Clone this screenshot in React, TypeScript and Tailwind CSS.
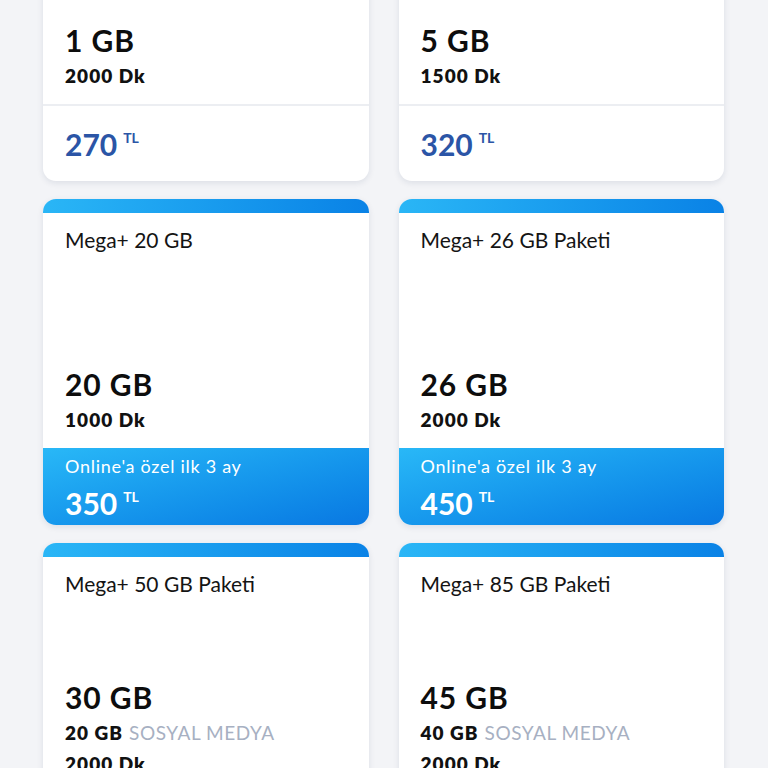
import React from "react";

type Plan = {
  title: string;
  data: string;
  lines: { main: string; extra?: string }[];
  price: string;
  promo?: string;
  highlight: boolean;
};

const plans: Plan[] = [
  { title: "Mega 1 GB", data: "1 GB", lines: [{ main: "2000 Dk" }], price: "270", highlight: false },
  { title: "Mega 5 GB", data: "5 GB", lines: [{ main: "1500 Dk" }], price: "320", highlight: false },
  { title: "Mega+ 20 GB", data: "20 GB", lines: [{ main: "1000 Dk" }], price: "350", promo: "Online'a özel ilk 3 ay", highlight: true },
  { title: "Mega+ 26 GB Paketi", data: "26 GB", lines: [{ main: "2000 Dk" }], price: "450", promo: "Online'a özel ilk 3 ay", highlight: true },
  { title: "Mega+ 50 GB Paketi", data: "30 GB", lines: [{ main: "20 GB", extra: "SOSYAL MEDYA" }, { main: "2000 Dk" }], price: "499", promo: "Online'a özel ilk 3 ay", highlight: true },
  { title: "Mega+ 85 GB Paketi", data: "45 GB", lines: [{ main: "40 GB", extra: "SOSYAL MEDYA" }, { main: "2000 Dk" }], price: "599", promo: "Online'a özel ilk 3 ay", highlight: true },
];

function Card({ p }: { p: Plan }) {
  return (
    <div className="flex flex-col overflow-hidden rounded-[13px] bg-white shadow-[0_2px_6px_rgba(20,40,80,0.10)]">
      <div className={p.highlight ? "h-[14px] bg-gradient-to-r from-[#2ab6f6] to-[#0a82e6]" : "h-[14px] bg-white"} />
      <div className="flex h-[235px] flex-col justify-between px-[22px] pt-[13px] pb-[16px]">
        <div className="text-[21px] leading-[28px] text-[#141414]">{p.title}</div>
        <div>
          <div className="text-[30px] font-bold leading-[34px] tracking-[0.03em] text-[#0d0d0d]">{p.data}</div>
          <div className="mt-[7px] flex flex-col gap-[7px]">
            {p.lines.map((l, i) => (
              <div key={i} className="text-[19px] font-extrabold leading-[24px] tracking-[0.055em] text-[#111]">
                {l.main}
                {l.extra && (
                  <span className="ml-[6px] font-normal tracking-[0.03em] text-[#a7b0c2]">{l.extra}</span>
                )}
              </div>
            ))}
          </div>
        </div>
      </div>
      {p.highlight ? (
        <div className="h-[77px] bg-gradient-to-br from-[#29b8f7] to-[#0a78e2] px-[22px] pt-[6px] text-white">
          <div className="text-[18px] leading-[24px] tracking-[0.04em]">{p.promo}</div>
          <div className="mt-[8px] flex items-start leading-[34px]">
            <span className="text-[30px] font-bold">{p.price}</span>
            <span className="ml-[6px] mt-[1px] text-[14px] font-bold leading-[20px]">TL</span>
          </div>
        </div>
      ) : (
        <div className="flex h-[77px] items-center border-t-2 border-[#eceef2] px-[22px]">
          <div className="flex items-start text-[#2b55a6]">
            <span className="text-[30px] font-bold leading-[34px]">{p.price}</span>
            <span className="ml-[6px] mt-[1px] text-[14px] font-bold leading-[20px]">TL</span>
          </div>
        </div>
      )}
    </div>
  );
}

export default function App() {
  return (
    <div className="h-[768px] overflow-hidden bg-[#f3f4f7]" style={{ fontFamily: "Lato, 'Open Sans', sans-serif" }}>
      <div className="mt-[-145px] grid grid-cols-2 gap-x-[30px] gap-y-[18px] pl-[43px] pr-[44px]">
        {plans.map((p, i) => (
          <Card key={i} p={p} />
        ))}
      </div>
    </div>
  );
}
